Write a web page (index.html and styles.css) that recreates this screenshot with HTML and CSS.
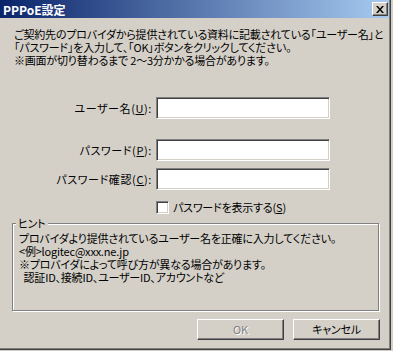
FILE: index.html
```html
<!DOCTYPE html>
<html lang="ja">
<head>
  <meta charset="UTF-8">
  <title>PPPoE設定</title>
  <link rel="stylesheet" href="styles.css">
</head>
<body>
  <div class="window">
    <div class="titlebar">
      <span class="title">PPPoE設定</span>
      <span class="close">
        <svg width="8" height="7" viewBox="0 0 8 7"><path d="M0 0h2l2 2.5L6 0h2L5 3.5 8 7H6L4 4.5 2 7H0l3-3.5z" fill="#000"/></svg>
      </span>
    </div>

    <div class="content">
      <p class="intro">
        ご契約先のプロバイダから提供されている資料に記載されている「ユーザー名」と<br>
        「パスワード」を入力して、「OK」ボタンをクリックしてください。<br>
        ※画面が切り替わるまで 2～3分かかる場合があります。
      </p>

      <div class="field first">
        <label for="user">ユーザー名(<u>U</u>):</label>
        <input type="text" id="user" class="edit">
      </div>
      <div class="field second">
        <label for="pass">パスワード(<u>P</u>):</label>
        <input type="password" id="pass" class="edit">
      </div>
      <div class="field third">
        <label for="pass2">パスワード確認(<u>C</u>):</label>
        <input type="password" id="pass2" class="edit">
      </div>

      <div class="showpass">
        <span class="check"></span>
        <span>パスワードを表示する(<u>S</u>)</span>
      </div>

      <div class="group">
        <span class="legend">ヒント</span>
        <p>
          プロバイダより提供されているユーザー名を正確に入力してください。<br>
          &lt;例&gt;logitec@xxx.ne.jp<br>
          ※プロバイダによって呼び方が異なる場合があります。<br>
          &nbsp;&nbsp;認証ID、接続ID、ユーザーID、アカウントなど
        </p>
      </div>

      <div class="buttons">
        <button class="btn disabled">OK</button>
        <button class="btn">キャンセル</button>
      </div>
    </div>
  </div>
</body>
</html>
```

FILE: styles.css
```css
body {
  margin: 0;
  background: #d4d0c8;
  font-family: "Noto Sans CJK JP", "Liberation Sans", sans-serif;
  font-size: 11px;
  line-height: 13px;
  letter-spacing: -0.2px;
  font-feature-settings: "palt";
  color: #000;
}
.window {
  width: 390px;
  height: 349px;
  border-right: 1px solid #404040;
  border-bottom: 1px solid #404040;
  box-shadow: inset -1px -1px 0 #808080;
  display: flex;
  flex-direction: column;
}
.titlebar {
  height: 18px;
  margin-right: 1px;
  background: linear-gradient(to right, #0a246a, #a6caf0);
  display: flex;
  align-items: center;
  justify-content: space-between;
  padding: 0 1px 0 3px;
}
.title {
  color: #fff;
  font-weight: bold;
  font-size: 12px;
  letter-spacing: 0;
  font-feature-settings: normal;
}
.close {
  width: 16px;
  height: 14px;
  box-sizing: border-box;
  background: #d4d0c8;
  border: 1px solid;
  border-color: #fff #404040 #404040 #fff;
  box-shadow: inset -1px -1px 0 #808080;
  display: flex;
  align-items: center;
  justify-content: center;
}
.content {
  padding-top: 10px;
}
.intro {
  margin: 0;
  padding-left: 14px;
}
.field {
  display: flex;
  align-items: center;
  gap: 4px;
}
.field label {
  width: 152px;
  text-align: right;
  letter-spacing: 0.6px;
}
.first {
  margin-top: 30px;
}
.second {
  margin-top: 20px;
}
.third {
  margin-top: 7px;
}
.edit {
  width: 174px;
  height: 22px;
  box-sizing: border-box;
  margin: 0;
  padding: 0 3px;
  background: #fff;
  border: 1px solid;
  border-color: #808080 #fff #fff #808080;
  box-shadow: inset 1px 1px 0 #404040, inset -1px -1px 0 #d4d0c8;
  outline: none;
}
.showpass {
  display: flex;
  align-items: center;
  gap: 4px;
  margin: 11px 0 0 156px;
}
.check {
  width: 13px;
  height: 13px;
  box-sizing: border-box;
  background: #fff;
  border: 1px solid;
  border-color: #808080 #fff #fff #808080;
  box-shadow: inset 1px 1px 0 #404040, inset -1px -1px 0 #d4d0c8;
}
.group {
  position: relative;
  width: 367px;
  height: 88px;
  box-sizing: border-box;
  margin: 9px 0 0 12px;
  border: 1px solid #808080;
  box-shadow: 1px 1px 0 #fff, inset 1px 1px 0 #fff;
  padding: 8px 0 0 6px;
}
.group p {
  margin: 0;
}
.legend {
  position: absolute;
  top: -7px;
  left: 3px;
  padding: 0 2px;
  background: #d4d0c8;
}
.buttons {
  width: 380px;
  display: flex;
  justify-content: flex-end;
  gap: 9px;
  margin-top: 8px;
}
.btn {
  width: 87px;
  height: 21px;
  box-sizing: border-box;
  margin: 0;
  padding: 0;
  background: #d4d0c8;
  border: 1px solid;
  border-color: #fff #404040 #404040 #fff;
  box-shadow: inset -1px -1px 0 #808080;
  font: inherit;
  letter-spacing: inherit;
  font-feature-settings: "palt";
  color: #000;
}
.btn.disabled {
  color: #808080;
  text-shadow: 1px 1px 0 #fff;
}
```
